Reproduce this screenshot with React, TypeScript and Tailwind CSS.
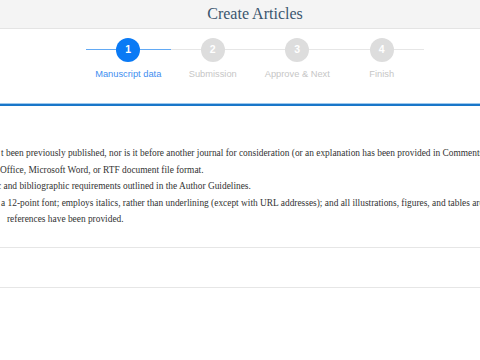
import React from 'react';

const steps = [
  { n: 1, label: 'Manuscript data' },
  { n: 2, label: 'Submission' },
  { n: 3, label: 'Approve & Next' },
  { n: 4, label: 'Finish' },
];

const current = 1;

// checklist lines, as far as they show inside the window
const checklist = [
  { text: 't been previously published, nor is it before another journal for consideration (or an explanation has been provided in Comments to the Editor).', indent: 'pl-[1px]' },
  { text: 'Office, Microsoft Word, or RTF document file format.', indent: 'pl-0' },
  { text: 'c and bibliographic requirements outlined in the Author Guidelines.', indent: '-ml-[3px]' },
  { text: 'a 12-point font; employs italics, rather than underlining (except with URL addresses); and all illustrations, figures, and tables are placed within the text.', indent: 'pl-[1px]' },
  { text: 'references have been provided.', indent: 'pl-[7px]' },
];

function Stepper() {
  return (
    <div className="ml-[86px] grid w-[338px] grid-cols-4">
      {steps.map((s) => {
        const active = s.n <= current;
        return (
          <div key={s.n} className="relative flex flex-col items-center">
            <div className={`absolute left-0 right-0 top-[11px] h-px ${active ? 'bg-[#62a9f4]' : 'bg-[#e6e6e6]'}`} />
            <div
              className={`relative z-10 flex h-[24px] w-[24px] items-center justify-center rounded-full text-[10.5px] font-bold text-white ${
                active ? 'bg-[#0a7af5]' : 'bg-[#dddddd]'
              }`}
            >
              {s.n}
            </div>
            <div
              className={`mt-[6px] whitespace-nowrap text-[9.3px] leading-[12px] ${
                active ? 'text-[#428ef0]' : 'text-[#c6c6c6]'
              }`}
            >
              {s.label}
            </div>
          </div>
        );
      })}
    </div>
  );
}

export default function App() {
  return (
    <div className="h-[360px] w-[480px] overflow-hidden bg-white font-['Liberation_Sans',Arial,sans-serif]">
      <div className="flex h-[29px] items-center justify-center border-b border-[#e4e4e4] bg-[#f4f4f4] pl-[30px]">
        <h1 className="font-['Liberation_Serif','Times_New_Roman',serif] text-[16px] leading-none text-[#3b566f]">
          Create Articles
        </h1>
      </div>

      <div className="pt-[9px]">
        <Stepper />
      </div>

      <div className="mt-[23px]">
        <div className="h-px bg-[#9cc8ee]" />
        <div className="h-[2px] bg-[#1976c9]" />
      </div>

      <div className="mt-[39px] overflow-hidden font-['Liberation_Serif','Times_New_Roman',serif] text-[9.4px] leading-[16.5px] text-[#333333]">
        {checklist.map((line, i) => (
          <div key={i} className={`whitespace-nowrap ${line.indent}`}>
            {line.text}
          </div>
        ))}
      </div>

      <div className="mt-[19px] border-t border-[#e6e6e6]" />
      <div className="h-[39px]" />
      <div className="border-t border-[#e6e6e6]" />
    </div>
  );
}
